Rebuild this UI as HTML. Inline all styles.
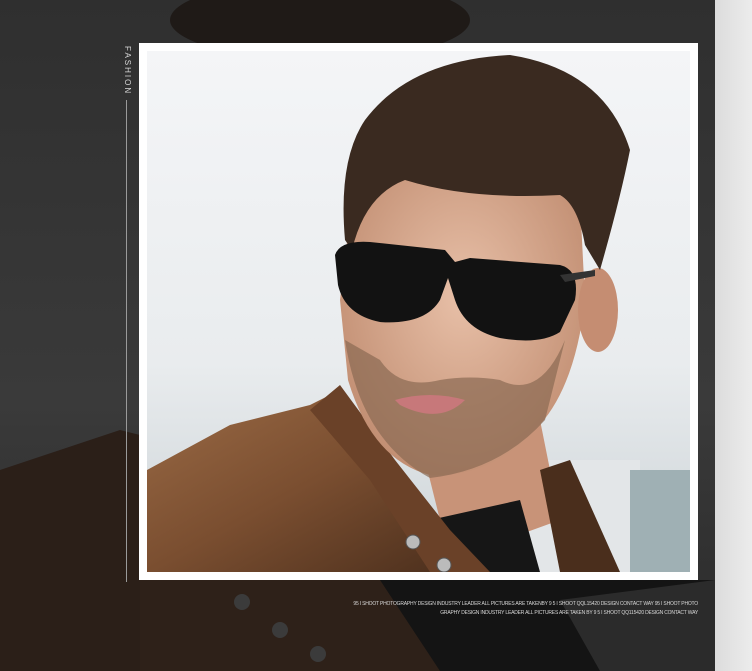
<!DOCTYPE html>
<html><head><meta charset="utf-8"><style>
html,body{margin:0;padding:0;width:752px;height:671px;overflow:hidden;background:#333;}
.t{position:absolute;font-family:"Liberation Sans",sans-serif;}
</style></head><body>
<svg width="752" height="671" style="position:absolute;left:0;top:0">
<defs>
<linearGradient id="bg" x1="0" y1="0" x2="0" y2="1"><stop offset="0" stop-color="#2f2f2f"/><stop offset="0.6" stop-color="#3a3a3a"/><stop offset="1" stop-color="#2a2a2a"/></linearGradient>
<linearGradient id="sky" x1="0" y1="0" x2="0" y2="1"><stop offset="0" stop-color="#f4f5f7"/><stop offset="0.6" stop-color="#e9ecee"/><stop offset="1" stop-color="#ccd3d7"/></linearGradient>
<linearGradient id="jk" x1="0" y1="0" x2="1" y2="1"><stop offset="0" stop-color="#9a6a45"/><stop offset="0.5" stop-color="#7a4e30"/><stop offset="1" stop-color="#4a2e1c"/></linearGradient>
<radialGradient id="face" cx="0.5" cy="0.45" r="0.6"><stop offset="0" stop-color="#e8c0a8"/><stop offset="1" stop-color="#c08c70"/></radialGradient>
<linearGradient id="rs" x1="0" y1="0" x2="1" y2="0"><stop offset="0" stop-color="#dcdcdc"/><stop offset="1" stop-color="#ececec"/></linearGradient>
<clipPath id="ph"><rect x="147" y="51" width="543" height="521"/></clipPath>
</defs>
<rect width="752" height="671" fill="url(#bg)"/>
<ellipse cx="320" cy="20" rx="150" ry="40" fill="#1f1a17"/>
<path d="M0 470 L120 430 L160 440 L160 671 L0 671Z" fill="#2b1f18"/>
<path d="M140 580 L400 580 L470 671 L140 671Z" fill="#2e2119"/>
<path d="M380 580 L715 580 L715 671 L440 671Z" fill="#141414"/>
<path d="M560 600 L715 580 L715 671 L600 671Z" fill="#3a3a3a" opacity="0.6"/>
<circle cx="242" cy="602" r="8" fill="#3b3b3b"/><circle cx="280" cy="630" r="8" fill="#3b3b3b"/><circle cx="318" cy="654" r="8" fill="#3b3b3b"/>
<rect x="715" y="0" width="37" height="671" fill="url(#rs)"/>
<line x1="126.5" y1="100" x2="126.5" y2="582" stroke="#9a9a9a" stroke-width="1"/>
<rect x="139" y="43" width="559" height="537" fill="#fff"/>
<g clip-path="url(#ph)">
<rect x="147" y="51" width="543" height="521" fill="url(#sky)"/>
<rect x="520" y="460" width="120" height="112" fill="#e3e6e8"/>
<rect x="630" y="470" width="60" height="102" fill="#9fb0b4"/>
<path d="M420 440 L540 420 L560 520 L450 560Z" fill="#c89378"/>
<path d="M430 520 L520 500 L540 572 L440 572Z" fill="#161616"/>
<path d="M147 470 L230 425 L310 405 L330 395 L400 470 L470 572 L147 572Z" fill="url(#jk)"/>
<path d="M310 410 L340 385 L395 460 L450 530 L490 572 L430 572 L370 480Z" fill="#6a4128"/>
<path d="M540 470 L570 460 L620 572 L560 572Z" fill="#4a2e1c"/>
<circle cx="413" cy="542" r="7" fill="#bbb" stroke="#555"/><circle cx="444" cy="565" r="7" fill="#bbb" stroke="#555"/>
<path d="M352 200 Q355 160 420 150 Q560 140 580 200 L585 300 Q575 390 535 430 Q490 478 430 475 Q372 460 348 380 L340 300Z" fill="url(#face)"/>
<ellipse cx="598" cy="310" rx="20" ry="42" fill="#c58d72"/>
<path d="M345 340 Q360 440 430 478 Q500 470 545 420 L565 340 Q540 400 500 380 Q470 375 440 380 Q400 390 380 360Z" fill="#8a6a52" opacity="0.7"/>
<path d="M395 400 Q430 390 465 400 Q440 425 400 405Z" fill="#c7787a"/>
<path d="M345 240 Q338 160 365 120 Q410 60 510 55 Q605 70 630 150 Q620 200 600 270 L585 245 Q578 205 560 195 Q470 200 405 180 Q365 195 352 250Z" fill="#3a2a20"/>
<path d="M335 255 Q340 240 370 242 L445 250 L455 262 L470 258 L560 265 Q580 270 575 300 L560 332 Q540 345 500 338 Q465 330 455 300 L448 278 L440 300 Q425 325 380 322 Q345 315 338 285Z" fill="#121212"/>
<path d="M560 275 L595 270 L595 276 L565 282Z" fill="#333"/>
</g>
</svg>
<div class="t" style="left:120px;top:46px;width:12px;writing-mode:vertical-rl;color:#d8d8d8;font-size:8px;letter-spacing:2px;">FASHION</div>
<div class="t" style="left:300px;top:600px;width:398px;text-align:right;color:#d8d8d8;font-size:5px;line-height:9px;white-space:nowrap;letter-spacing:-0.2px;">95 I SHOOT PHOTOGRAPHY DESIGN INDUSTRY LEADER ALL PICTURES ARE TAKENBY 9 5 I SHOOT QQL15420 DESIGN CONTACT WAY 95 I SHOOT PHOTO<br>GRAPHY DESIGN INDUSTRY LEADER ALL PICTURES ARE TAKEN BY 9 5 I SHOOT QQ115420 DESIGN CONTACT WAY</div>
</body></html>
